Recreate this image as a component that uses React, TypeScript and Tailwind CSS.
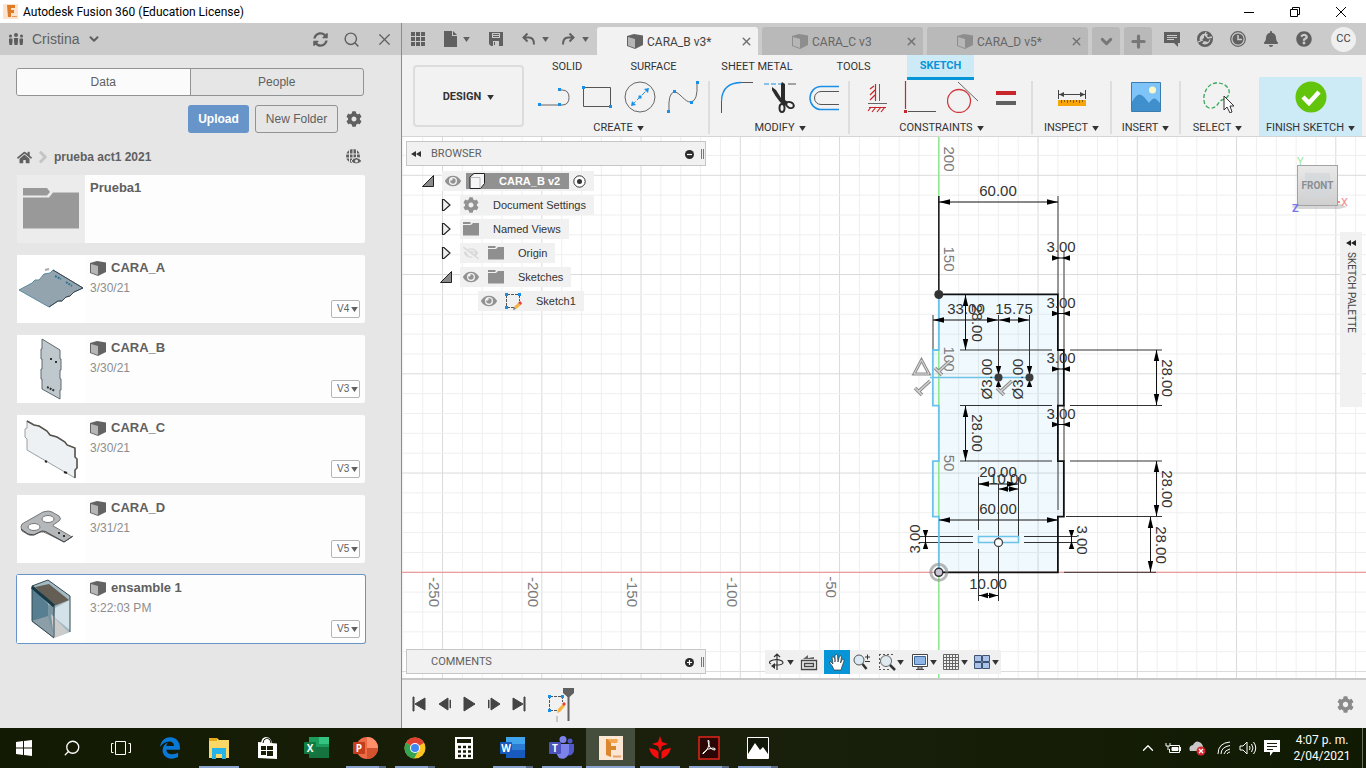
import { useState } from 'react'
import type { ReactNode } from 'react'
import { Search, X, ChevronDown, ChevronRight, ChevronUp, Plus } from 'lucide-react'
import { FaBell, FaCog, FaEdgeLegacy, FaEye, FaEyeSlash, FaHome, FaQuestionCircle, FaSyncAlt } from 'react-icons/fa'

/* ---------- small shared icons ---------- */

function Caret({ className = '' }: { className?: string }) {
  return (
    <svg viewBox="0 0 8 6" className={`w-[7px] h-[5px] shrink-0 ${className}`} fill="currentColor">
      <path d="M0 0h8L4 6z" />
    </svg>
  )
}

function Cube({ className = '' }: { className?: string }) {
  return (
    <svg viewBox="0 0 16 15" className={`w-4 h-[15px] shrink-0 ${className}`}>
      <path d="M0 2L7 0l9 1.5V11l-8 4-8-3z" fill="#636363" />
      <path d="M1 3L8 5v9L1 11.500z" fill="#b5b5b5" />
    </svg>
  )
}

function SketchIcon() {
  return (
    <svg viewBox="0 0 17 17" className="w-[17px] h-[17px] shrink-0">
      <path d="M2 1.500h12M2 14.500h7M1.500 2v12M14.500 2v6" stroke="#555" strokeDasharray="3 1" fill="none" />
      <path d="M0 0h3v3H0zM13 0h3v3h-3zM0 13h3v3H0z" fill="#1b8fe6" />
      <path d="M9 14l4-4 3 2-5 4z" fill="#f5b440" />
      <path d="M13 10l2-2 2 2-1 2z" fill="#e3403a" />
      <path d="M9 14l-1 3 3-1z" fill="#777" />
    </svg>
  )
}

function SmallFolder() {
  return (
    <svg viewBox="0 0 16 14" className="w-4 h-3.5 shrink-0" fill="#8f8f8f">
      <path d="M0 0h7l1 1-1 1H0zM0 3h8l2-2h6v12.500H0z" />
    </svg>
  )
}

/* ---------- data panel ---------- */

const plateThumb = (
  <svg viewBox="0 0 68 68" className="w-[68px] h-[68px]">
    <path d="M2 35l13-7 3-3h4l5-6 6-1 3-3 30 18-9 4-4 4-4 1-4 4h-4l-9 6z" fill="#93a4ae" stroke="#5d8ba0" />
    <path d="M36 15l30 18-9 4-4 4-4 1-4 4h-4l-9 6" fill="none" stroke="#3c4448" />
    <path d="M38 21l6 3M49 27l6 4" stroke="#2e7595" strokeWidth="2" strokeDasharray="2 1" />
    <path d="M28 15l4-1" stroke="#aaa" strokeWidth="2" />
  </svg>
)

const sideThumb = (
  <svg viewBox="0 0 68 68" className="w-[68px] h-[68px]">
    <path d="M25 4l18 11v9h1v11h-1v9h1v11h-1v9L25 54V44h-1V34h1V24h-1V14h1z" fill="#bfc9cd" stroke="#5c696e" />
    <path d="M33 24h2M38 27h2M30 52l8 4" stroke="#333" strokeWidth="2" strokeDasharray="2 1" />
  </svg>
)

const panelThumb = (
  <svg viewBox="0 0 68 68" className="w-[68px] h-[68px]">
    <path d="M10 6l7 4 5 1 8 5 3 4 7 2 8 5 2 3 8 3v9l2 2v9l-2 2v8L10 35V24l-2-2v-8l2-1z" fill="#edf1f3" stroke="#9aa1a4" />
    <path d="M10 6l7 4 5 1 8 5 3 4 7 2 8 5 2 3 8 3v9l2 2v9l-2 2v8" fill="none" stroke="#55534c" strokeWidth="1.500" />
    <path d="M28 46l2 1M47 57l3 1" stroke="#222" strokeWidth="2" />
  </svg>
)

const bracketThumb = (
  <svg viewBox="0 0 68 68" className="w-[68px] h-[68px]">
    <path fillRule="evenodd" d="M4 32l1-3L26 17q6-2 9 0l7 4q3 3 0 5l-6 4q0 2 2 2l17 10-8 5-16-8q-5-3-8-2l-7 3q-3 1-6-1l-5-3zM11 32a6 3.500 0 1 0 12 0a6 3.500 0 1 0-12 0M25 24a6 3.500 0 1 0 12 0a6 3.500 0 1 0-12 0" fill="#b4b8bb" stroke="#777" />
    <path d="M4 34l7 5 6 1 8-4q4 0 6 2l16 9 9-6" fill="none" stroke="#444" />
    <path d="M41 38h2M46 41h2" stroke="#333" strokeWidth="2" />
  </svg>
)

const boxThumb = (
  <svg viewBox="0 0 68 68" className="w-[68px] h-[68px]">
    <path d="M15 11l16-6 22 16v36l-16 6-22-16z" fill="#a4bac3" />
    <path d="M15 12l16 17v14L15 46z" fill="#587f91" />
    <path d="M31 30l7 1v28L15 46l16-4z" fill="#7895a1" />
    <path d="M38 33l15-8v30l-16-13z" fill="#d3e2e9" />
    <path d="M15 46l16-5 6 22z" fill="#8c9ea7" />
    <path d="M34 39l17 18-14 6z" fill="#ccc" />
    <path d="M18 12l14-3 20 16-15 6z" fill="#655e55" />
    <path d="M15 11l16-6 22 16v36M15 11l22 20v31M15 11v35l22 17" fill="none" stroke="#33484f" />
    <path d="M15 12l22 19" stroke="#173946" strokeWidth="3" />
  </svg>
)

const files = [
  { name: 'CARA_A', date: '3/30/21', version: 'V4', thumb: plateThumb },
  { name: 'CARA_B', date: '3/30/21', version: 'V3', thumb: sideThumb },
  { name: 'CARA_C', date: '3/30/21', version: 'V3', thumb: panelThumb },
  { name: 'CARA_D', date: '3/31/21', version: 'V5', thumb: bracketThumb },
  { name: 'ensamble 1', date: '3:22:03 PM', version: 'V5', thumb: boxThumb },
]

function DataPanel() {
  const [selected, setSelected] = useState('ensamble 1')

  return (
    <aside className="w-[402px] shrink-0 bg-[#e6e6e6] border-r border-[#8c8c8c] flex flex-col text-[#606060] font-['Liberation_Sans',sans-serif]">
      <header className="h-8 bg-[#cbcbcb] flex items-center pl-2 pr-[7px]">
        <button className="flex items-center text-sm" type="button">
          <svg viewBox="0 0 16 13" className="w-4 h-[13px] mr-2" fill="#5d5d5d">
            <circle cx="8" cy="2" r="2" />
            <circle cx="2.500" cy="3" r="1.500" />
            <circle cx="13.500" cy="3" r="1.500" />
            <path d="M6 5h4v3l-.5 4h-3L6 8zM1 5.500h3.500V9L4 12H1.500L1 9zM11.500 5.500H15V9l-.5 3H12l-.5-3z" />
          </svg>
          Cristina
          <ChevronDown size={14} strokeWidth={3.5} className="ml-2" />
        </button>
        <div className="ml-auto flex items-center gap-[15px]">
          <button type="button" aria-label="Refresh"><FaSyncAlt size={15} /></button>
          <button type="button" aria-label="Search"><Search size={17} strokeWidth={2} /></button>
          <button type="button" aria-label="Close panel"><X size={19} strokeWidth={1.5} /></button>
        </div>
      </header>

      <div className="pl-[17px] pr-9 pt-[13px] flex flex-col">
        <div className="-ml-px mr-px flex h-7 rounded-[3px] border border-[#929292] text-xs">
          <button type="button" className="flex-1 bg-[#fbfbfb] rounded-l-[2px] border-r border-[#929292]">Data</button>
          <button type="button" className="flex-1">People</button>
        </div>

        <div className="mt-[9px] flex justify-end items-center gap-1.5 text-xs pr-[3px]">
          <button type="button" className="h-7 w-[61px] rounded-[3px] bg-[#6795c9] text-white font-bold">Upload</button>
          <button type="button" className="h-7 w-[83px] rounded-[3px] border border-[#929292]">New Folder</button>
          <button type="button" aria-label="Settings" className="ml-0.5"><FaCog size={16} /></button>
        </div>

        <div className="mt-[15px] h-[18px] flex items-center text-xs">
          <a href="#home" aria-label="Home"><FaHome size={15} /></a>
          <ChevronRight size={18} strokeWidth={4} className="ml-0.5 text-[#c4c4c4]" />
          <span className="font-bold ml-0.5">prueba act1 2021</span>
          <svg viewBox="0 0 16 16" className="w-4 h-4 ml-auto mr-[3px]" fill="none">
            <circle cx="7" cy="7" r="7" fill="#606060" />
            <path d="M7 0v14M0 5h14M0 9h14M3.500 1v12M10.500 1v12" stroke="#e6e6e6" />
            <path d="M5 12q5-7 11 0-6 6-11 0z" fill="#606060" stroke="#e6e6e6" />
            <circle cx="10.500" cy="12" r="1.500" fill="#e6e6e6" />
          </svg>
        </div>

        <div className="mt-[9px] flex flex-col gap-3">
          <div className="h-[68px] bg-[#fdfdfd] rounded-r-xs flex">
            <div className="w-[68px] bg-[#ececec] flex items-center justify-center">
              <svg viewBox="0 0 56 42" className="w-14 h-[42px]" fill="#999">
                <path d="M0 0h24l3 4-3 3.500H0zM0 9.500h26l4-5h26v36H0z" />
              </svg>
            </div>
            <span className="font-bold text-[13px] leading-4 pl-[5px] pt-[5px]">Prueba1</span>
          </div>

          {files.map(file => (
            <div
              key={file.name}
              onClick={() => setSelected(file.name)}
              className={`h-[68px] bg-[#fdfdfd] rounded-xs flex ${selected === file.name ? 'ring-1 ring-[#6795c9]' : ''}`}
            >
              <div className="w-[68px] bg-white">{file.thumb}</div>
              <div className="flex-1 pl-[5px] pt-[5px]">
                <div className="flex items-center gap-[5px] font-bold text-[13px] leading-4">
                  <Cube />
                  {file.name}
                </div>
                <div className="text-xs leading-4 mt-1 text-[#8d8d8d]">{file.date}</div>
              </div>
              <label className="self-end relative mr-[5px] mb-[5px] flex items-center">
                <select
                  aria-label={`Version of ${file.name}`}
                  className="appearance-none w-[29px] h-[18px] pl-[5px] text-[10px] leading-4 rounded-xs border border-[#b5b5b5] bg-[#fdfdfd]"
                >
                  <option>{file.version}</option>
                </select>
                <Caret className="absolute right-0.5 pointer-events-none" />
              </label>
            </div>
          ))}
        </div>
      </div>
    </aside>
  )
}

/* ---------- application bar ---------- */

function DocTab({ name, active = false }: { name: string; active?: boolean }) {
  return (
    <div
      className={`w-[161px] h-7 rounded-t-[3px] flex items-center pl-[30px] pr-[5px] text-xs ${
        active ? 'bg-[#f2f2f2] text-[#444]' : 'bg-[#b9b9b9] text-[#666]'
      }`}
    >
      <Cube className={active ? '' : 'opacity-50'} />
      <button type="button" className="ml-1 pt-px">{name}</button>
      <button type="button" aria-label={`Close ${name}`} className="ml-auto text-[#707070]">
        <X size={13} strokeWidth={2.5} />
      </button>
    </div>
  )
}

function AppBar() {
  return (
    <div className="h-8 bg-[#cbcbcb] flex items-end text-[#606060]">
      <div className="h-8 w-[195px] flex items-center pl-[9px] shrink-0">
        <button type="button" aria-label="Show data panel">
          <svg viewBox="0 0 14 14" className="w-3.5 h-3.5" fill="currentColor">
            <path d="M0 0h4v4H0zM5 0h4v4H5zM10 0h4v4h-4zM0 5h4v4H0zM5 5h4v4H5zM10 5h4v4h-4zM0 10h4v4H0zM5 10h4v4H5zM10 10h4v4h-4z" />
          </svg>
        </button>
        <button type="button" aria-label="File" className="ml-[19px] flex items-center gap-1.5">
          <svg viewBox="0 0 13 16" className="w-[13px] h-4" fill="currentColor"><path d="M0 0h8v5h5v11H0zM9 0l4 4H9z" /></svg>
          <Caret />
        </button>
        <button type="button" aria-label="Save" className="ml-[19px]">
          <svg viewBox="0 0 14 14" className="w-3.5 h-3.5"><path d="M0 0h14v14H2l-2-2z" fill="#606060" /><path d="M3 1h8v5H3zM4 9h6v5H4z" fill="#cbcbcb" /><path d="M4 2.500h6M4 4.500h6M5.500 10v3" stroke="#606060" /></svg>
        </button>
        <button type="button" aria-label="Undo" className="ml-[19px] flex items-center gap-[7px]">
          <svg viewBox="0 0 13 12" className="w-[13px] h-3" fill="none" stroke="currentColor" strokeWidth="2"><path d="M5.500 0.500L1.500 4.500l4 4M2 4.500h5q5 0 5 7" /></svg>
          <Caret />
        </button>
        <button type="button" aria-label="Redo" className="ml-[13px] flex items-center gap-[7px]">
          <svg viewBox="0 0 13 12" className="w-[13px] h-3" fill="none" stroke="currentColor" strokeWidth="2"><path d="M7.500 0.500l4 4-4 4M11 4.500H6q-5 0-5 7" /></svg>
          <Caret />
        </button>
      </div>

      <div className="flex gap-1">
        <DocTab name="CARA_B v3*" active />
        <DocTab name="CARA_C v3" />
        <DocTab name="CARA_D v5*" />
        <button type="button" aria-label="All documents" className="w-7 h-7 rounded-t-[3px] bg-[#b9b9b9] flex items-center justify-center">
          <ChevronDown size={17} strokeWidth={4} className="text-[#777]" />
        </button>
        <button type="button" aria-label="New design" className="w-7 h-7 rounded-t-[3px] bg-[#b9b9b9] flex items-center justify-center">
          <Plus size={19} strokeWidth={4} className="text-[#777]" />
        </button>
      </div>

      <div className="h-8 ml-auto pr-2.5 flex items-center gap-[17px]">
        <button type="button" aria-label="Notes">
          <svg viewBox="0 0 16 15" className="w-4 h-[15px]"><path d="M0 0h16v11h-2v4l-4-4H0z" fill="#606060" /><path d="M3 3.500h10M3 5.500h10M3 7.500h7" stroke="#cbcbcb" /></svg>
        </button>
        <button type="button" aria-label="Extensions">
          <svg viewBox="0 0 16 16" className="w-4 h-4"><circle cx="8" cy="8" r="6.700" stroke="#606060" strokeWidth="2.600" fill="none" /><path d="M2 11l5-4V4l3 1 2-3 4 4-3 2-2 3-4-1-3 4z" fill="#606060" /><path d="M9 1l-1 3 3 3 4-1M1 11l5-2" stroke="#cbcbcb" strokeWidth="1.300" fill="none" /></svg>
        </button>
        <button type="button" aria-label="Job status">
          <svg viewBox="0 0 16 16" className="w-4 h-4"><circle cx="8" cy="8" r="7.300" fill="#cbcbcb" stroke="#606060" strokeWidth="1.200" /><circle cx="8" cy="8" r="5.500" fill="#606060" /><path d="M8 4v4.500h4" stroke="#cbcbcb" strokeWidth="1.500" fill="none" /></svg>
        </button>
        <button type="button" aria-label="Notifications"><FaBell size={16} /></button>
        <button type="button" aria-label="Help"><FaQuestionCircle size={16} /></button>
        <button type="button" className="ml-0.5 w-[25px] h-[25px] rounded-full bg-[#efefef] text-[11px] text-[#444]">CC</button>
      </div>
    </div>
  )
}

/* ---------- ribbon ---------- */

function Tool({ label, children }: { label: string; children: ReactNode }) {
  return (
    <button type="button" aria-label={label} className="w-8 h-8">
      <svg viewBox="0 0 32 32" className="w-8 h-8" fill="none">{children}</svg>
    </button>
  )
}

function Group({ label, className = '', children }: { label: string; className?: string; children: ReactNode }) {
  return (
    <div className={`flex flex-col items-center justify-between ${className}`}>
      <div className="flex gap-[11px]">{children}</div>
      <button type="button" className="flex items-center gap-1 text-[11px] leading-3">
        {label}
        <Caret className="w-[6px]" />
      </button>
    </div>
  )
}

function Ribbon() {
  const tab = 'flex items-center justify-center h-[25px]'
  const iconGroup = 'h-[53px] pl-[11px] pr-[9px] border-r-2 border-[#dedede]'
  return (
    <div className="h-[82px] bg-[#f2f2f2] border-b border-[#d5d5d5] flex text-[#333] text-[11px]">
      <button type="button" className="mt-2.5 ml-[11px] w-[111px] h-[62px] pt-0.5 shrink-0 border-2 border-[#dcdcdc] rounded-[4px] font-bold flex items-center justify-center gap-1.5">
        DESIGN
        <Caret />
      </button>
      <div className="ml-[3px]">
        <nav className="flex">
          <button type="button" className={`${tab} w-20`}>SOLID</button>
          <button type="button" className={`${tab} w-[93px]`}>SURFACE</button>
          <button type="button" className={`${tab} w-[114px]`}>SHEET METAL</button>
          <button type="button" className={`${tab} w-[79px]`}>TOOLS</button>
          <button type="button" className="ml-3.5 w-[67px] h-[25px] bg-[#cdeaf7] border-b-[3px] border-[#0696d7] text-[#0696d7] font-bold">SKETCH</button>
        </nav>

        <div className="mt-px flex items-start">
          <Group label="CREATE" className={iconGroup}>
            <Tool label="Line">
              <path d="M2 24h20M22 9h2q7 0 7 7.500T24 24h-2" stroke="#666" />
              <path d="M0 22h3v3H0zM20 22h3v3h-3zM20 7h3v3h-3z" fill="#1b8fe6" />
            </Tool>
            <Tool label="Rectangle">
              <path d="M2.500 6.500h27v19h-27z" stroke="#555" />
              <path d="M1 5h3v3H1zM28 24h3v3h-3z" fill="#1b8fe6" />
            </Tool>
            <Tool label="Circle">
              <circle cx="16" cy="16" r="15" stroke="#666" />
              <path d="M8 24L24 8" stroke="#1b8fe6" strokeDasharray="5 2" />
              <path d="M14.500 14.500h3v3h-3zM7 25l1-5 4 4zM25 7l-5 1 4 4z" fill="#1b8fe6" />
            </Tool>
            <Tool label="Spline">
              <path d="M2 30Q1 12 7 11C12 10 18 22 24 21Q31 20 30 2" stroke="#666" />
              <path d="M0 29h3v3H0zM6 9h3v3H6zM23 20h3v3h-3zM29 0h3v3h-3z" fill="#1b8fe6" />
            </Tool>
          </Group>
          <Group label="MODIFY" className={iconGroup}>
            <Tool label="Fillet">
              <path d="M.5 32V20M20 1.500h12" stroke="#555" />
              <path d="M.5 20Q1 2 20 1.500" stroke="#1b8fe6" strokeWidth="1.300" />
            </Tool>
            <Tool label="Trim">
              <path d="M0 3h17" stroke="#1b8fe6" strokeDasharray="5 2" />
              <path d="M24 3h8" stroke="#555" />
              <path d="M8 6l4 3 5 8V3l1-2 3 2v16l3 2-3 4-5-4q-5-6-8-12z" fill="#2b2b2b" />
              <ellipse cx="18" cy="27" rx="2.500" ry="4" stroke="#2b2b2b" strokeWidth="2" />
              <ellipse cx="26" cy="24" rx="4" ry="2.800" stroke="#2b2b2b" strokeWidth="2" transform="rotate(25 26 24)" />
            </Tool>
            <Tool label="Offset">
              <path d="M32 5.500H14a11 11.500 0 0 0 0 23h18" stroke="#1b8fe6" strokeWidth="1.500" />
              <path d="M32 10.500H14a6.500 6.500 0 0 0 0 13h18" stroke="#555" />
            </Tool>
          </Group>
          <Group label="CONSTRAINTS" className={iconGroup}>
            <Tool label="Fix">
              <path d="M14.500 3v17M8 26.500h17M13 5l-4 3M14 9l-5 5M14 14l-5 5M10 26l-3 4M15 26l-4 5M20 26l-4 5M24 26l-4 5" stroke="#c8262b" strokeWidth="1.200" />
              <path d="M18.500 3v17M7 22.500h19" stroke="#666" />
            </Tool>
            <Tool label="Perpendicular">
              <path d="M1.500 0v28" stroke="#c8262b" strokeWidth="1.200" />
              <path d="M4 30.500h28" stroke="#555" />
              <path d="M0 29h3v3H0z" fill="#c8262b" />
            </Tool>
            <Tool label="Tangent">
              <circle cx="12" cy="20" r="11.500" stroke="#d0383c" strokeWidth="1.300" />
              <path d="M11 1l20 19" stroke="#666" />
            </Tool>
            <Tool label="Equal">
              <path d="M6 10h20v4H6z" fill="#c8262b" />
              <path d="M6 20h20v4H6z" fill="#606060" />
            </Tool>
          </Group>
          <Group label="INSPECT" className="h-[53px] w-[79px] border-r-2 border-[#dedede]">
            <Tool label="Measure">
              <path d="M2.500 9v9M29.500 9v9M3 13.500h26" stroke="#444" />
              <path d="M3 13.500l5-2.500v5zM29 13.500l-5-2.500v5z" fill="#444" />
              <path d="M2 19h28v6H2z" fill="#f8a50c" />
              <path d="M5.500 19v3M8.500 19v2M11.500 19v3M14.500 19v2M17.500 19v3M20.500 19v2M23.500 19v3M26.500 19v2" stroke="#8a5c00" />
            </Tool>
          </Group>
          <Group label="INSERT" className="h-[53px] w-[69px] border-r-2 border-[#dedede]">
            <Tool label="Insert image">
              <path d="M1.500 1.500h29v29h-29z" fill="#7fc4f8" stroke="#3a7cae" />
              <path d="M2 21q6-12 12-5l5 6q4-6 7-4l4 4v8H2z" fill="#3e8fcb" />
              <circle cx="22.500" cy="9" r="3.500" fill="#fbf7c8" />
            </Tool>
          </Group>
          <Group label="SELECT" className="h-[53px] w-[73px]">
            <Tool label="Select">
              <path d="M7 27C-2 24 1 3 14 2s19 13 6 17c-4 1-4 9-13 8z" stroke="#3aa85b" strokeWidth="1.300" strokeDasharray="4 2" />
              <path d="M22 15v14l3-3 3 6 2-1-2-6h4z" fill="#fff" stroke="#333" />
            </Tool>
          </Group>
          <Group label="FINISH SKETCH" className="ml-[5px] -mt-1 pt-1 pb-0.5 h-[59px] w-[103px] bg-[#cdeaf7]">
            <Tool label="Finish sketch">
              <circle cx="16" cy="16" r="15.500" fill="#62c40b" />
              <path d="M8 16l6 6L24 11" stroke="#fff" strokeWidth="4.500" />
            </Tool>
          </Group>
        </div>
      </div>
    </div>
  )
}

/* ---------- sketch canvas ---------- */

// Canvas scale and origin
const U = 1.985
const X0 = 938.8
const Y0 = 572.3
const mx = (v: number) => X0 + v * U
const my = (v: number) => Y0 - v * U

const steps = (from: number, to: number) => Array.from({ length: to - from + 1 }, (_, i) => from + i)

function Label({ x, y, r = 0, gray = false, children }: { x: number; y: number; r?: number; gray?: boolean; children: string }) {
  return (
    <text x={x} y={y} textAnchor="middle" fontSize="15" fill={gray ? '#7c7c7c' : '#333'} transform={r ? `rotate(${r} ${x} ${y})` : undefined}>
      {children}
    </text>
  )
}

// Arrowhead with its tip at x,y; dir is where it points
function Head({ x, y, dir, size = 11 }: { x: number; y: number; dir: 'l' | 'r' | 'u' | 'd'; size?: number }) {
  const angle = { r: 0, d: 90, l: 180, u: 270 }[dir]
  return <path d={`M0 0L${-size} -2.700V2.700z`} fill="#000" transform={`translate(${x} ${y}) rotate(${angle})`} />
}

function HDim({ x1, x2, y, size }: { x1: number; x2: number; y: number; size?: number }) {
  return (
    <g>
      <path d={`M${x1} ${y}H${x2}`} stroke="#111" />
      <Head x={x1} y={y} dir="l" size={size} />
      <Head x={x2} y={y} dir="r" size={size} />
    </g>
  )
}

function VDim({ x, y1, y2 }: { x: number; y1: number; y2: number }) {
  return (
    <g>
      <path d={`M${x} ${y1}V${y2}`} stroke="#111" />
      <Head x={x} y={y1} dir="u" />
      <Head x={x} y={y2} dir="d" />
    </g>
  )
}

const Tick = ({ x, y }: { x: number; y: number }) => (
  <g transform={`translate(${x} ${y})`} fill="none">
    <path d="M-7 1L0 8M-3 4L8-6" stroke="#8c8c8c" strokeWidth="3.500" />
    <path d="M-7 1L0 8M-3 4L8-6" stroke="#d4d4d4" strokeWidth="1.500" />
  </g>
)

function SketchView() {
  const right = `M${mx(0)} ${my(140)}H${mx(60)}V${my(112)}H${mx(63)}V${my(84)}H${mx(60)}V${my(56)}H${mx(63)}V${my(28)}H${mx(60)}V${my(0)}H${mx(0)}`
  const left = `V${my(28)}H${mx(-3)}V${my(56)}H${mx(0)}V${my(84)}H${mx(-3)}V${my(112)}H${mx(0)}V${my(140)}`

  return (
    <svg className="absolute inset-0 w-full h-full font-['Liberation_Sans',sans-serif]" fill="none">
      <g transform="translate(-402 -137)">
        {steps(-30, 60).map(i => (
          <path key={`v${i}`} d={`M${mx(i * 10)} 0V1400`} stroke={i % 5 === 0 ? '#dadada' : '#efefef'} />
        ))}
        {steps(-40, 24).map(i => (
          <path key={`h${i}`} d={`M400 ${my(i * 10)}H2600`} stroke={i % 5 === 0 ? '#dadada' : '#efefef'} />
        ))}
        <path d={right + left} fill="#0696d7" fillOpacity="0.06" />
        <path d={`M400 ${Y0}H2600`} stroke="#ee8a8a" />
        <path d={`M${X0} 0V1400`} stroke="#84e884" strokeWidth="1.300" />

        {/* axis numbers */}
        <Label x={944} y={159} r={90} gray>200</Label>
        <Label x={944} y={259} r={90} gray>150</Label>
        <Label x={944} y={359} r={90} gray>100</Label>
        <Label x={944} y={463} r={90} gray>50</Label>
        <Label x={429} y={592} r={90} gray>-250</Label>
        <Label x={528} y={592} r={90} gray>-200</Label>
        <Label x={627} y={592} r={90} gray>-150</Label>
        <Label x={727} y={592} r={90} gray>-100</Label>
        <Label x={826} y={587} r={90} gray>-50</Label>

        {/* extension lines */}
        <path d="M1058 196V294M1064 252V350M1058 350V405M1064 405V461M1058 461V510M933 315V349" stroke="#777" strokeWidth="1.500" />
        <path d={`M${X0} 196V290`} stroke="#222" strokeWidth="1.600" />
        <path
          d="M998.500 315V378M1029.500 315V378M960 350H1052M1070 350H1162M960 405.500H1052M1070 405.500H1162M960 461H1052M1070 461H1162M1066 516.500H1162M1064 572.300H1156M978.500 477V530M1018.500 477V536M998.500 484V601M978.500 549V601M919 536.500H973M919 542.500H973M1024 536.500H1077M1024 542.500H1077"
          stroke="#333"
        />

        {/* profile */}
        <path d={right} stroke="#111" strokeWidth="1.800" />
        <path d={`M${mx(0)} ${my(0)}${left}`} stroke="#6cc3ea" strokeWidth="1.800" />
        <path d="M930 377.500H1030" stroke="#6cc3ea" strokeWidth="1.500" />
        <rect x="978.500" y="536.500" width="40" height="6" stroke="#6cc3ea" strokeWidth="1.500" />

        {/* horizontal dimensions */}
        <HDim x1={939} x2={1058} y={202} />
        <Label x={998} y={196}>60.00</Label>
        <HDim x1={933} x2={998} y={320} />
        <Label x={966} y={314}>33.00</Label>
        <HDim x1={999} x2={1029} y={320} />
        <Label x={1014} y={314}>15.75</Label>
        <HDim x1={978} x2={1018} y={484} />
        <Label x={998} y={477}>20.00</Label>
        <HDim x1={999} x2={1018} y={489} size={9} />
        <Label x={1008} y={484}>10.00</Label>
        <HDim x1={939} x2={1058} y={520} />
        <Label x={998} y={514}>60.00</Label>
        <HDim x1={979} x2={998} y={595.5} size={9} />
        <Label x={988} y={589}>10.00</Label>
        {[258, 313.5, 369, 424.5].map(y => (
          <g key={y}>
            <path d={`M1052 ${y}H1070`} stroke="#111" />
            <Head x={1060} y={y} dir="r" size={8} />
            <Head x={1062} y={y} dir="l" size={8} />
            <Label x={1061} y={y - 6}>3.00</Label>
          </g>
        ))}

        {/* vertical dimensions */}
        <VDim x={965.5} y1={295} y2={350} />
        <Label x={972} y={323} r={90}>28.00</Label>
        <VDim x={965.5} y1={406} y2={461} />
        <Label x={972} y={433} r={90}>28.00</Label>
        <VDim x={1156.5} y1={350} y2={405} />
        <Label x={1162} y={378} r={90}>28.00</Label>
        <VDim x={1156.5} y1={461} y2={516} />
        <Label x={1162} y={489} r={90}>28.00</Label>
        <VDim x={1150.5} y1={517} y2={572} />
        <Label x={1156} y={545} r={90}>28.00</Label>
        <Label x={992} y={379} r={-90}>Ø3.00</Label>
        <Label x={1023} y={379} r={-90}>Ø3.00</Label>
        <Label x={920} y={539} r={-90}>3.00</Label>
        <Label x={1077} y={540} r={90}>3.00</Label>
        {[925.5, 1071.5].map(x => (
          <g key={x}>
            <path d={`M${x} 530V549`} stroke="#111" />
            <Head x={x} y={538} dir="d" size={8} />
            <Head x={x} y={541} dir="u" size={8} />
          </g>
        ))}

        {/* constraints and points */}
        <path d="M921.500 360L914 374H929z" stroke="#909090" strokeWidth="3" />
        <path d="M921.500 360L914 374H929z" stroke="#ddd" />
        <Tick x={922} y={387} />
        <Tick x={942} y={367} />
        <Tick x={1004} y={387} />
        {[998.5, 1029.5].map(x => (
          <g key={x}>
            <Head x={x} y={375} dir="d" size={9} />
            <Head x={x} y={380} dir="u" size={7} />
            <circle cx={x} cy="377.500" r="4" fill="#3c3c3c" />
          </g>
        ))}
        <circle cx={X0} cy="294.500" r="4.500" fill="#333" />
        <circle cx="998.500" cy="542.500" r="4" fill="#fff" stroke="#444" strokeWidth="1.300" />
        <circle cx={X0} cy={Y0} r="8" stroke="#888" strokeOpacity="0.600" strokeWidth="3" />
        <circle cx={X0} cy={Y0} r="4" fill="#c9c5d6" stroke="#333" strokeWidth="1.500" />
      </g>
    </svg>
  )
}

/* ---------- browser tree ---------- */

function Twisty({ open = false }: { open?: boolean }) {
  return open ? (
    <svg viewBox="0 0 12 12" className="w-3 h-3 shrink-0"><path d="M0.500 11.500h11v-11z" fill="#8a8a8a" stroke="#222" /></svg>
  ) : (
    <svg viewBox="0 0 12 14" className="w-3 h-3.5 shrink-0"><path d="M2.500 1.500h1.500l6 5.500-6 5.500H2.500z" fill="#eee" stroke="#222" strokeWidth="1.200" /></svg>
  )
}

const row = 'h-5 flex items-center'
const chip = 'h-5 bg-[#f1f1f1] flex items-center pl-[3px] pr-2'

function PaletteBar({ title, icon, open }: { title: string; icon: string; open?: boolean }) {
  return (
    <div className="w-[300px] h-[25px] shrink-0 bg-[#f1f1f1] border border-[#c6c6c6] flex items-center pl-1 pr-px pt-px text-[11px] text-[#606060] font-[Roboto,sans-serif]">
      <svg viewBox="0 0 10 6" className={`w-2.5 h-1.5 mr-2.5 ${open ? '' : 'invisible'}`} fill="#333"><path d="M5 0v6L0 3zM10 0v6L5 3z" /></svg>
      {title}
      <button type="button" aria-label={`Toggle ${title}`} className="ml-auto">
        <svg viewBox="0 0 9 9" className="w-[9px] h-[9px]"><circle cx="4.500" cy="4.500" r="4.500" fill="#2c2c2c" /><path d={icon} stroke="#fff" strokeWidth="1.200" /></svg>
      </button>
      <span className="ml-[7px] w-[3px] h-2.5 border-x border-[#777]" />
    </div>
  )
}

function BrowserTree() {
  return (
    <div className="text-[11px] text-[#333] font-['Liberation_Sans',sans-serif]">
      <PaletteBar title="BROWSER" icon="M2 4.500h5" open />
      <div className="mt-[5px] flex flex-col gap-1">
        <div className={`${row} pl-4`}>
          <Twisty open />
          <div className={`${chip} ml-2`}>
            <FaEye size={16} color="#929292" />
            <div className="ml-[5px] h-4 bg-[#919191] text-white font-bold flex items-center pl-[3px] pr-[9px]">
              <svg viewBox="0 0 16 16" className="w-4 h-4 mr-3.5"><path d="M1 4l4-3.500h10.500v10l-4 5H1z" fill="#f5f5f8" stroke="#222" /><path d="M1.500 4.500H11v10.500" fill="none" stroke="#bbb" /></svg>
              CARA_B v2
            </div>
            <svg viewBox="0 0 13 13" className="w-[13px] h-[13px] ml-1"><circle cx="6.500" cy="6.500" r="5.700" fill="#fff" stroke="#333" /><circle cx="6.500" cy="6.500" r="2.500" fill="#333" /></svg>
          </div>
        </div>
        <div className={`${row} pl-[34px]`}>
          <Twisty />
          <div className={`${chip} ml-2`}><FaCog size={16} color="#929292" className="mr-3.5" />Document Settings</div>
        </div>
        <div className={`${row} pl-[34px]`}>
          <Twisty />
          <div className={`${chip} ml-2`}><SmallFolder /><span className="ml-3.5">Named Views</span></div>
        </div>
        <div className={`${row} pl-[34px]`}>
          <Twisty />
          <div className={`${chip} ml-2`}><FaEyeSlash size={16} color="#dadada" className="mr-[9px]" /><SmallFolder /><span className="ml-3.5">Origin</span></div>
        </div>
        <div className={`${row} pl-[34px]`}>
          <Twisty open />
          <div className={`${chip} ml-2`}><FaEye size={16} color="#929292" className="mr-[9px]" /><SmallFolder /><span className="ml-3.5">Sketches</span></div>
        </div>
        <div className={`${row} pl-[72px]`}>
          <div className={chip}><FaEye size={16} color="#929292" className="mr-2" /><SketchIcon /><span className="ml-3.5">Sketch1</span></div>
        </div>
      </div>
    </div>
  )
}

function ViewCube() {
  return (
    <svg viewBox="0 0 58 60" className="w-[58px] h-[60px]">
      <defs>
        <linearGradient id="cube" x1="0" y1="0" x2="0" y2="1">
          <stop offset="0" stopColor="#e9e9e9" />
          <stop offset="1" stopColor="#cfcfcf" />
        </linearGradient>
      </defs>
      <path d="M0 53l8-3h42l6 3-8 2H8z" fill="#999" opacity="0.400" />
      <text x="6" y="11" fontSize="11" fill="#9be89b">Y</text>
      <rect x="6.500" y="11.500" width="40" height="40" fill="url(#cube)" stroke="#a3a3a3" />
      <rect x="14" y="19" width="25" height="25" fill="#d3d7dc" opacity="0.700" />
      <text x="26.500" y="35" fontSize="10" fontWeight="700" fill="#8b8e93" textAnchor="middle">FRONT</text>
      <text x="1" y="58" fontSize="11" fontWeight="700" fill="#7777f0">Z</text>
      <text x="50" y="52" fontSize="11" fill="#f58a8a">X</text>
      <path d="M47 48h2" stroke="#f58a8a" strokeWidth="2" />
    </svg>
  )
}

function NavTool({ label, className = '', caret = false, children }: { label: string; className?: string; caret?: boolean; children: ReactNode }) {
  return (
    <button type="button" aria-label={label} className={`h-6 flex items-center justify-center gap-px ${className}`}>
      <svg viewBox="0 0 18 18" className="w-[18px] h-[18px] shrink-0" fill="none">{children}</svg>
      {caret && <Caret className="w-[6px]" />}
    </button>
  )
}

function NavBar() {
  return (
    <div className="h-6 bg-[#f0f0f0] flex text-[#333]">
      <NavTool label="Orbit" className="w-8" caret>
        <path d="M9 1v16M6 4l3-3 3 3M3 11q-4-2 2-4 5-1 9 1 3 3-3 4H5" stroke="#333" strokeWidth="1.200" />
        <path d="M3 13l4-3v6z" fill="#333" />
      </NavTool>
      <NavTool label="Look at" className="w-6">
        <path d="M1.500 7.500h15v9h-15zM4.500 10.500h9v3h-9z" stroke="#444" strokeWidth="1.300" />
        <path d="M3 6l5-4v3l6-1v2z" fill="#666" />
      </NavTool>
      <NavTool label="Pan" className="ml-[3px] w-[26px] bg-[#0696d7]">
        <path d="M6 17q-1-4-5-8 2-1 4 2L4 4q2-1 3 2l0 3V2q2-1 2.500 0L10 9l1.500-6q2-1 2 1L12.500 10l2-4q2 0 1.500 2-2 5-3 9z" fill="#fff" stroke="#333" strokeWidth="0.700" />
      </NavTool>
      <NavTool label="Zoom" className="w-[24px]">
        <circle cx="6" cy="7" r="5" fill="#dbeaf2" stroke="#555" />
        <path d="M9.500 11l4 5" stroke="#333" strokeWidth="2.500" />
        <path d="M12 4h5M14.500 1.500v5M12 8.500h5" stroke="#333" />
      </NavTool>
      <NavTool label="Fit" className="w-[34px]" caret>
        <path d="M1 1.500h15M1.500 1v16M1 16.500h12" stroke="#555" strokeDasharray="2 2" />
        <circle cx="8" cy="8" r="5.500" fill="#dfeaf0" stroke="#666" />
        <path d="M12 12l5 5" stroke="#333" strokeWidth="2.500" />
      </NavTool>
      <NavTool label="Display settings" className="w-[31px]" caret>
        <path d="M1.500 1.500h15v12h-15z" fill="#fff" stroke="#444" />
        <path d="M3.500 3.500h11v8h-11z" fill="#8fb5e6" stroke="#3f6597" />
        <path d="M7 14h4v2H7zM5 16.500h8" stroke="#444" />
      </NavTool>
      <NavTool label="Grid and snaps" className="w-[31px]" caret>
        <path d="M1.500 1.500h15v15h-15zM4.500 1v16M7.500 1v16M10.500 1v16M13.500 1v16M1 4.500h16M1 7.500h16M1 10.500h16M1 13.500h16" stroke="#666" />
      </NavTool>
      <NavTool label="Viewports" className="w-[31px]" caret>
        <path d="M1.500 2.500h7v6h-7zM9.500 2.500h7v6h-7zM1.500 9.500h7v6h-7zM9.500 9.500h7v6h-7z" fill="#aac3e6" stroke="#3d5474" />
      </NavTool>
    </div>
  )
}

function Canvas() {
  return (
    <div className="flex-1 min-h-[400px] relative bg-white overflow-hidden">
      <SketchView />
      <div className="relative h-full flex flex-col justify-between p-1">
        <div className="flex justify-between">
          <BrowserTree />
          <div className="flex flex-col items-end pt-[13px]">
            <div className="mr-[13px]"><ViewCube /></div>
            <button type="button" className="mt-[18px] w-[22px] h-[175px] bg-[#f1f1f1] flex flex-col items-center pt-2 gap-1.5 text-[10px] text-[#444]">
              <svg viewBox="0 0 10 6" className="w-2.5 h-1.5" fill="#222"><path d="M5 0v6L0 3zM10 0v6L5 3z" /></svg>
              <span className="[writing-mode:vertical-rl]">SKETCH PALETTE</span>
            </button>
          </div>
        </div>
        <div className="flex items-end">
          <PaletteBar title="COMMENTS" icon="M2 4.500h5M4.500 2v5" />
          <div className="ml-[59px]"><NavBar /></div>
        </div>
      </div>
    </div>
  )
}

/* ---------- timeline ---------- */

const playback = [
  { label: 'Go to start', d: 'M2 1h1v14H2zM14 2v12L4 8z' },
  { label: 'Step back', d: 'M12 2v12L3 8zM14 4h.5v8H14z' },
  { label: 'Play', d: 'M3 1v14l11-7z' },
  { label: 'Step forward', d: 'M5 2v12l9-6zM2.500 4H3v8h-.5z' },
  { label: 'Go to end', d: 'M13 1h1v14h-1zM2 2v12l10-6z' },
]

function Timeline() {
  return (
    <div className="h-[50px] border-t-2 border-[#c8c8c8] bg-[#f1f1f1] flex items-center pl-[9px] pr-3">
      <div className="flex gap-[9px]">
        {playback.map(p => (
          <button key={p.label} type="button" aria-label={p.label}>
            <svg viewBox="0 0 16 16" className="w-4 h-4" fill="#444" stroke="#444"><path d={p.d} /></svg>
          </button>
        ))}
      </div>
      <svg viewBox="0 0 30 34" className="w-[30px] h-[34px] ml-[21px] mt-0.5">
        <path d="M2 8.500h13M2 22.500h8M1.500 8v14M14.500 8v6" stroke="#555" strokeDasharray="3 1" fill="none" />
        <path d="M0 7h3v3H0zM13 7h3v3h-3zM0 21h3v3H0z" fill="#1b8fe6" />
        <path d="M10 21l5-5 2 2-5 6-3 1z" fill="#f5b440" />
        <path d="M14 16l2-2 2 2-2 2z" fill="#e3403a" />
        <path d="M9 28v6" stroke="#c9c9c9" strokeWidth="2" />
        <path d="M15 0h11v5l-4.500 4h-2L15 5z" fill="#606060" />
        <path d="M20.500 5v28" stroke="#606060" strokeWidth="2" />
      </svg>
      <button type="button" aria-label="Timeline settings" className="ml-auto text-[#8a8a8a]"><FaCog size={17} /></button>
    </div>
  )
}

/* ---------- taskbar ---------- */

function Letter({ bg, children }: { bg: string; children: string }) {
  return (
    <>
      <rect x="0" y="7" width="12" height="12" rx="1" fill={bg} />
      <text x="6" y="17" fontSize="10" fontWeight="700" fill="#fff" textAnchor="middle">{children}</text>
    </>
  )
}

interface TaskApp {
  label: string
  running?: boolean
  stacked?: boolean
  active?: boolean
  icon: ReactNode
}

const apps: TaskApp[] = [
  { label: 'Edge', icon: <FaEdgeLegacy size={22} color="#0a78d6" x="2" y="2" /> },
  {
    label: 'File Explorer',
    running: true,
    icon: (
      <>
        <path d="M3 3h8l2 2h10v18H3z" fill="#fbd766" />
        <path d="M3 3h8v3H3z" fill="#e5a91c" />
        <path d="M6 13h14v11h-4v-5h-6v5H6z" fill="#27b2ea" />
      </>
    ),
  },
  {
    label: 'Store',
    icon: (
      <>
        <path d="M3 7l19 1.500V24L3 23zM6 8q1-7 6-6 4 1 5 6" fill="#fff" />
        <path d="M8 8q0-4 4-5 4 1 4 5" stroke="#161e08" fill="none" />
        <path d="M6 11h5v4H6zM12 11h6v4h-6zM6 16h5v4H6zM12 16h6v5h-6z" fill="#161e08" />
      </>
    ),
  },
  {
    label: 'Excel',
    icon: (
      <>
        <path d="M5 2h20v21H5z" fill="#1b9d5c" /><path d="M15 2h10v7H15z" fill="#33c481" /><path d="M5 12h20v11H5z" fill="#14733f" />
        <Letter bg="#107c41">X</Letter>
      </>
    ),
  },
  {
    label: 'PowerPoint',
    running: true,
    stacked: true,
    icon: (
      <>
        <circle cx="14" cy="13" r="11" fill="#ed6c47" /><path d="M14 13h11a11 11 0 0 1-11 11z" fill="#d35230" /><path d="M14 2a11 11 0 0 1 11 11H14z" fill="#ff8f6b" />
        <Letter bg="#c43e1c">P</Letter>
      </>
    ),
  },
  {
    label: 'Chrome',
    running: true,
    stacked: true,
    icon: (
      <>
        <circle cx="13" cy="13" r="10.500" fill="#f9c623" />
        <path d="M13 13L3.900 7.700a10.500 10.500 0 0 1 18.200 0z" fill="#e04334" />
        <path d="M13 13L3.900 7.700A10.500 10.500 0 0 0 12 23.500l4-7z" fill="#33a553" />
        <circle cx="13" cy="13" r="5" fill="#fff" /><circle cx="13" cy="13" r="4" fill="#4285f4" />
      </>
    ),
  },
  {
    label: 'Calculator',
    icon: (
      <>
        <path d="M4 2h18v22H4z" fill="#fff" />
        <path d="M6 4h14v4H6z" fill="#161e08" />
        <path d="M7 12h13M7 16.500h13M7 21h13" stroke="#161e08" strokeWidth="2.500" strokeDasharray="3 2" />
      </>
    ),
  },
  {
    label: 'Word',
    running: true,
    stacked: true,
    icon: (
      <>
        <path d="M6 2h19v21H6z" fill="#185abd" /><path d="M6 2h19v7H6z" fill="#41a5ee" /><path d="M6 9h19v6H6z" fill="#2b7cd3" />
        <Letter bg="#185abd">W</Letter>
      </>
    ),
  },
  {
    label: 'Teams',
    running: true,
    icon: (
      <>
        <circle cx="14" cy="4.500" r="3.500" fill="#7b83eb" /><circle cx="21" cy="6" r="2.500" fill="#5059c9" />
        <path d="M17 9h8v7q-2 6-8 4z" fill="#5059c9" /><path d="M7 9h13v9q-3 8-10 5l-3-5z" fill="#7b83eb" />
        <Letter bg="#4b53bc">T</Letter>
      </>
    ),
  },
  {
    label: 'Fusion 360',
    running: true,
    active: true,
    icon: (
      <>
        <path d="M1 1h24v24H1z" fill="#fbe6d3" />
        <path d="M8 4h11v4h-6v3h5v4h-5v7l-5-2z" fill="#d9862f" />
        <path d="M13 8h6l1-3-1-1H9z" fill="#f2a750" />
        <path d="M15 21.500h8" stroke="#e7a36a" strokeWidth="2" />
      </>
    ),
  },
  {
    label: 'Design tool',
    running: true,
    icon: (
      <path d="M13 1l2 6 6 2-6 2-2 6-2-6-6-2 6-2zM2 13q8 1 9.500 4v7Q4 21 2 13zM24 13q-8 1-9.500 4v7q7.500-3 9.500-11z" fill="#f30d0d" />
    ),
  },
  {
    label: 'Acrobat Reader',
    running: true,
    stacked: true,
    icon: (
      <>
        <path d="M3 2h20v22H3z" fill="#2a0704" stroke="#e3241b" strokeWidth="1.500" />
        <path d="M7 19q7-6 6-13-1-2-1 0 1 9 7 9 1-2-2-2-6 0-10 5z" stroke="#fff" fill="none" />
      </>
    ),
  },
  {
    label: 'Photos',
    running: true,
    stacked: true,
    icon: (
      <>
        <path d="M2.500 2.500h21v21h-21z" fill="#11180a" stroke="#fff" />
        <path d="M3 19l7-11 5 7 3-3 5 7v4H3z" fill="#fff" />
      </>
    ),
  },
]

function Taskbar() {
  return (
    <footer className="h-10 shrink-0 bg-linear-to-r from-[#131a03] via-[#1a200c] to-[#101a03] flex text-white">
      <button type="button" aria-label="Start" className="w-12 flex items-center justify-center">
        <svg viewBox="0 0 16 16" className="w-4 h-4" fill="#fff"><path d="M0 2l7-1v6.500H0zM8 1l8-1v7.500H8zM0 8.500h7V15l-7-1zM8 8.500h8V16l-8-1z" /></svg>
      </button>
      <button type="button" aria-label="Search" className="w-12 flex items-center justify-center">
        <Search size={18} strokeWidth={1.7} className="-scale-x-100" />
      </button>
      <button type="button" aria-label="Task view" className="w-[49px] flex items-center justify-center">
        <svg viewBox="0 0 20 16" className="w-5 h-4" fill="none" stroke="#fff"><path d="M4.500 1.500h10v13h-10zM2.500 3.500h-2v9h2M17.500 3.500h2v9h-2" /></svg>
      </button>
      {apps.map(app => (
        <button key={app.label} type="button" aria-label={app.label} className={`w-[49px] flex flex-col items-center justify-between pt-[7px] ${app.active ? 'bg-[#454d3c]' : ''}`}>
          <svg viewBox="0 0 26 26" className="w-[26px] h-[26px]" fontFamily="Open Sans, sans-serif">{app.icon}</svg>
          {app.running && (
            <span
              className={`h-0.5 bg-[#8ba3cf] ${app.active ? 'w-full' : 'w-10'} ${app.stacked ? 'border-r-[7px] border-[#5c6b85]' : ''}`}
            />
          )}
        </button>
      ))}

      <div className="ml-auto flex items-center">
        <ChevronUp size={18} strokeWidth={1.7} />
        <svg viewBox="0 0 16 12" className="w-4 h-3 ml-2" fill="none" stroke="#fff"><path d="M5 3.500h9.500v7H4.500V7M15.500 5v4M1 1v3h4V1M3 4v4" /><path d="M7 5.500h6v3H7z" fill="#fff" /></svg>
        <svg viewBox="0 0 18 16" className="w-[18px] h-4 ml-2"><path d="M1 11q-2-5 3-6 3-6 8-2 4 4 1 8z" fill="#c8c8c8" /><circle cx="12" cy="11" r="4.500" fill="#d8262e" /><path d="M10 9l4 4M14 9l-4 4" stroke="#fff" strokeWidth="1.300" /></svg>
        <svg viewBox="0 0 14 14" className="w-3.5 h-3.5 ml-2.5" fill="none" stroke="#fff"><path d="M1 13Q1 2 13 1M4 13Q4 6 13 4.500M7 13Q8 9 13 8M10 13q1-2 3-2" /></svg>
        <svg viewBox="0 0 18 14" className="w-[18px] h-3.5 ml-2" fill="none" stroke="#fff"><path d="M1 5h3l4-4v12L4 9H1zM10.500 5q1 2 0 4M12.500 3q3 4 0 8M14.500 1q4.500 6 0 12" /></svg>
        <svg viewBox="0 0 16 16" className="w-4 h-4 ml-[7px]"><path d="M0 0h16v12H9l-3 4v-4H0z" fill="#fff" /><path d="M3 3.500h10M3 6.500h10M3 9.500h6" stroke="#161e08" /></svg>
        <div className="ml-2.5 mr-2 w-[64px] text-xs leading-4 text-center whitespace-nowrap">
          4:07 p. m.
          <br />
          2/04/2021
        </div>
        <span className="w-px h-10 mr-[3px] bg-[#6b7062]" />
      </div>
    </footer>
  )
}

export default function App() {
  return (
    <div className="h-screen flex flex-col overflow-hidden bg-white font-[Roboto,sans-serif]">
      <div className="h-[23px] shrink-0 flex items-center pl-[3px] text-xs text-black">
        <svg viewBox="0 0 15 15" className="w-[15px] h-[15px] mr-[5px]">
          <path d="M0 0h15v15H0z" fill="#fbe3cd" />
          <path d="M4 1h8v3H8v2h3v3H8v4H5z" fill="#dd7b26" />
          <path d="M9 12.500h5" stroke="#e39a5c" />
        </svg>
        Autodesk Fusion 360 (Education License)
        <div className="ml-auto flex items-center pr-5 gap-9">
          <button type="button" aria-label="Minimize"><svg viewBox="0 0 10 10" className="w-2.5 h-2.5"><path d="M0 5.500h10" stroke="#000" /></svg></button>
          <button type="button" aria-label="Restore"><svg viewBox="0 0 10 10" className="w-2.5 h-2.5" fill="none" stroke="#000"><path d="M0.500 2.500h7v7h-7zM2.500 2V.500h7v7H8" /></svg></button>
          <button type="button" aria-label="Close"><svg viewBox="0 0 10 10" className="w-2.5 h-2.5"><path d="M0 0l10 10M10 0L0 10" stroke="#000" /></svg></button>
        </div>
      </div>

      <div className="flex-1 min-h-0 flex">
        <DataPanel />
        <main className="flex-1 min-w-0 flex flex-col">
          <AppBar />
          <Ribbon />
          <Canvas />
          <Timeline />
        </main>
      </div>

      <Taskbar />
    </div>
  )
}
